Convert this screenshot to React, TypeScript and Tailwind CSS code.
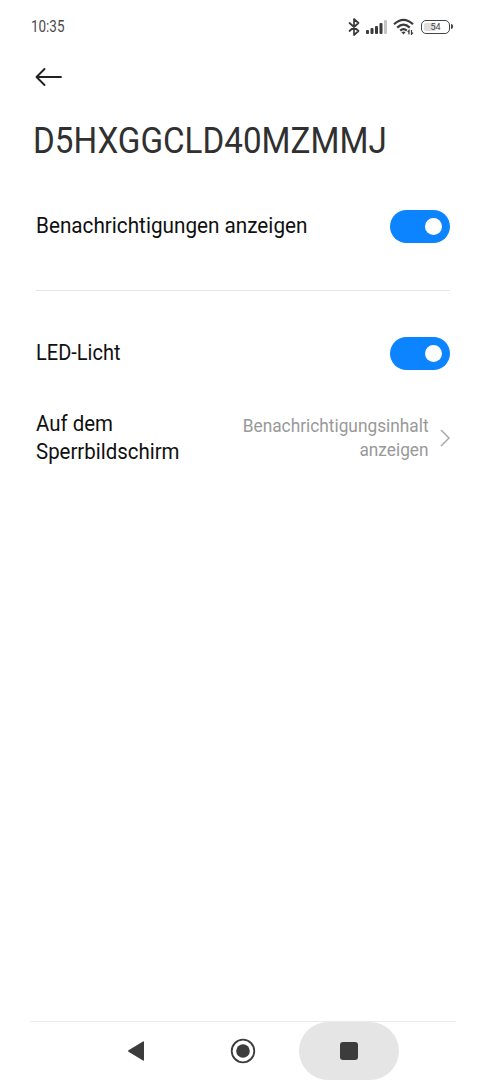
import type { ReactNode } from 'react';

function StatusBar() {
  return (
    <div className="flex h-[54px] items-center justify-between pl-[31px] pr-[33px]">
      <span className="origin-left scale-x-[0.84] text-[16px] leading-none text-[#4a4a4a]">10:35</span>
      <div className="flex items-center pb-px">
        {/* Bluetooth */}
        <svg width="14" height="20" viewBox="0 0 14 20" fill="none" stroke="#3a3a3a" strokeWidth="1.7" strokeLinejoin="round" strokeLinecap="round">
          <path d="M2.500 6 11.500 14 7 18V2l4.500 4-9 8" />
        </svg>
        {/* Signal */}
        <svg className="ml-[5px]" width="22" height="14" viewBox="0 0 22 14">
          <rect x="0" y="10" width="3" height="4" rx="1" fill="#3a3a3a" />
          <rect x="4.500" y="8" width="3" height="6" rx="1" fill="#3a3a3a" />
          <rect x="9" y="6" width="3" height="8" rx="1" fill="#3a3a3a" />
          <rect x="13.500" y="3" width="3" height="11" rx="1" fill="#3a3a3a" />
          <rect x="18" y="0" width="3" height="14" rx="1" fill="#c4c4c4" />
        </svg>
        {/* Wifi */}
        <svg className="ml-[5px]" width="22" height="17" viewBox="0 0 22 17" fill="none" stroke="#3a3a3a" strokeWidth="2.2">
          <path d="M1 6.200Q10.500-2.600 20 6.200M4.200 9.600Q10.500 3.800 16.800 9.600M7.200 12.600Q10.500 9.600 13.800 12.600" />
          <path d="m10.500 16.500-2-2.300q2-1.500 4 0z" fill="#3a3a3a" stroke="none" />
          <path d="M16 16.500v-4l-1.300 1.500M18.500 12v4.200l1.500-1.500" strokeWidth="1.200" />
        </svg>
        {/* Battery */}
        <div className="ml-[6px] flex items-center gap-px">
          <div className="flex h-[14px] w-[29px] rounded-[5px] border-[1.500px] border-[#444] p-[2px]">
            <div className="flex flex-1 items-center justify-center rounded-[2px] bg-linear-to-r from-[#dedede] from-54% to-white to-54%">
              <span className="pt-px text-[9px] leading-none text-[#444]">54</span>
            </div>
          </div>
          <div className="h-[5px] w-[2px] rounded-r-full bg-[#444]" />
        </div>
      </div>
    </div>
  );
}

function Toggle() {
  return (
    <div className="flex h-[33px] w-[60px] shrink-0 items-center justify-end rounded-full bg-[#0d84ff] pr-[8px]">
      <div className="size-[17px] rounded-full bg-white" />
    </div>
  );
}

function Row({ children }: { children: ReactNode }) {
  return <div className="flex items-center justify-between px-9">{children}</div>;
}

function NavBar() {
  return (
    <div className="mt-auto">
      <div className="mx-[30px] h-px bg-[#ebebeb]" />
      <div className="flex h-[58px] items-center pl-[86px]">
        <div className="flex w-[100px] justify-center">
          <svg width="18" height="22" viewBox="0 0 18 22">
            <path d="M1.500 10.300 16 1.400q1-.5 1 .6v18q0 1.100-1 .6L1.500 11.700q-1-.7 0-1.400z" fill="#3c3c3c" />
          </svg>
        </div>
        <div className="ml-[7px] flex w-[100px] justify-center">
          <svg width="26" height="26" viewBox="0 0 26 26">
            <circle cx="13" cy="13" r="11.300" fill="none" stroke="#3c3c3c" strokeWidth="1.800" />
            <circle cx="13" cy="13" r="6.800" fill="#3c3c3c" />
          </svg>
        </div>
        <div className="ml-[6px] flex h-[58px] w-[100px] items-center justify-center rounded-full bg-[#e5e5e5]">
          <div className="size-[18px] rounded-[3px] bg-[#3c3c3c]" />
        </div>
      </div>
    </div>
  );
}

export default function App() {
  return (
    <div className="flex h-[1080px] w-[486px] flex-col overflow-hidden bg-white font-['Roboto',sans-serif] text-[#101010]">
      <StatusBar />
      <div className="pl-[35px] pt-[13px]">
        <svg width="27" height="20" viewBox="0 0 27 20" fill="none" stroke="#222" strokeWidth="1.900" strokeLinecap="round" strokeLinejoin="round">
          <path d="M26 10H1.500M9.500 2l-8 8 8 8" />
        </svg>
      </div>
      <h1 className="mt-[32px] flex h-[44px] pl-[33px] text-[36px] leading-[44px] text-[#303030]">
        <span className="origin-left scale-x-[0.922] whitespace-nowrap">D5HXGGCLD40MZMMJ</span>
      </h1>
      <div className="mt-[47px]">
        <Row>
          <span className="origin-left scale-x-[0.963] whitespace-nowrap text-[21.500px]">Benachrichtigungen anzeigen</span>
          <Toggle />
        </Row>
      </div>
      <div className="mx-9 mt-[47px] h-px bg-[#e4e4e4]" />
      <div className="mt-[46px]">
        <Row>
          <span className="origin-left scale-x-[0.93] text-[21.500px]">LED-Licht</span>
          <Toggle />
        </Row>
      </div>
      <div className="mt-[40px]">
        <Row>
          <span className="origin-left scale-x-[0.95] text-[21.500px] leading-7">
            Auf dem
            <br />
            Sperrbildschirm
          </span>
          <div className="flex items-center">
            <span className="origin-right scale-x-[0.96] text-right text-[18px] leading-6 text-[#999]">
              Benachrichtigungsinhalt
              <br />
              anzeigen
            </span>
            <svg className="ml-[11px]" width="10" height="18" viewBox="0 0 10 18" fill="none" stroke="#a8a8a8" strokeWidth="1.500">
              <path d="m1 1 8 8-8 8" />
            </svg>
          </div>
        </Row>
      </div>
      <NavBar />
    </div>
  );
}
